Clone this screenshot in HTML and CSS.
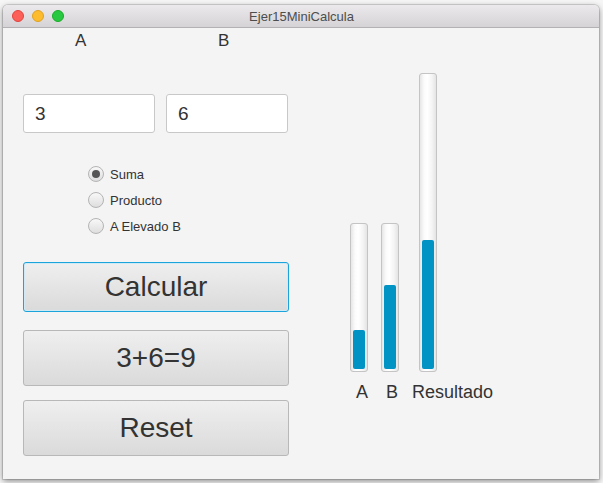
FILE: index.html
```html
<!DOCTYPE html>
<html>
<head>
<meta charset="utf-8">
<link rel="stylesheet" href="styles.css">
</head>
<body>
<div class="window">
  <div class="titlebar">
    <div class="lights">
      <span class="light red"></span>
      <span class="light yellow"></span>
      <span class="light green"></span>
    </div>
    <div class="title">Ejer15MiniCalcula</div>
  </div>
  <div class="content">
    <div class="left">
      <div class="ab-labels">
        <span class="lab-a">A</span>
        <span class="lab-b">B</span>
      </div>
      <div class="fields">
        <div class="field f1">3</div>
        <div class="field f2">6</div>
      </div>
      <div class="radios">
        <div class="radio-row"><span class="radio checked"></span><span>Suma</span></div>
        <div class="radio-row"><span class="radio"></span><span>Producto</span></div>
        <div class="radio-row"><span class="radio"></span><span>A Elevado B</span></div>
      </div>
      <div class="btn btn-calc">Calcular</div>
      <div class="btn btn-res">3+6=9</div>
      <div class="btn btn-reset">Reset</div>
    </div>
    <div class="right">
      <div class="bars">
        <div class="track short"><div class="fill" style="height:27%"></div></div>
        <div class="track short b"><div class="fill" style="height:59%"></div></div>
        <div class="track tall"><div class="fill" style="height:44%"></div></div>
      </div>
      <div class="bar-labels">
        <span class="bl-a">A</span>
        <span class="bl-b">B</span>
        <span>Resultado</span>
      </div>
    </div>
  </div>
</div>
</body>
</html>
```

FILE: styles.css
```css
* { box-sizing: border-box; }
html, body { margin: 0; padding: 0; }
body {
  background: #f6f6f6;
  padding: 5px 4px 4px 3px;
  font-family: "Liberation Sans", Arial, sans-serif;
  color: #333;
  width: 603px;
  height: 483px;
  overflow: hidden;
}
.window {
  width: 596px;
  height: 474px;
  border-radius: 5px 5px 0 0;
  box-shadow: 0 2px 6px rgba(0,0,0,0.45), 0 0 0 1px rgba(0,0,0,0.12);
  background: #f4f4f4;
  display: flex;
  flex-direction: column;
  overflow: hidden;
}
.titlebar {
  height: 23px;
  flex: none;
  background: linear-gradient(#ebe9eb, #d5d3d5);
  border-bottom: 1px solid #b3b1b3;
  display: flex;
  align-items: center;
  position: relative;
}
.lights {
  display: flex;
  gap: 8px;
  padding-left: 9px;
}
.light {
  width: 12px;
  height: 12px;
  border-radius: 50%;
  display: block;
}
.red { background: #fc5f57; border: 1px solid #e0443e; }
.yellow { background: #fdbc2e; border: 1px solid #dea123; }
.green { background: #28c840; border: 1px solid #1aab29; }
.title {
  flex: 1;
  text-align: center;
  font-size: 13px;
  color: #4d4d4d;
  margin-left: -60px;
  padding-top: 1px;
}
.content {
  flex: 1;
  display: flex;
  padding-left: 20px;
}
.left {
  width: 266px;
  display: flex;
  flex-direction: column;
}
.ab-labels {
  display: flex;
  padding-top: 3px;
  font-size: 17px;
  line-height: 20px;
}
.lab-a { width: 195px; padding-left: 52px; }
.fields {
  display: flex;
  gap: 11px;
  margin-top: 43px;
}
.field {
  height: 39px;
  background: #fff;
  border: 1px solid #c8c8c8;
  border-radius: 3px;
  font-size: 19px;
  line-height: 37px;
  padding-left: 11px;
  color: #333;
}
.f1 { width: 132px; }
.f2 { width: 122px; }
.radios {
  margin-top: 28px;
  padding-left: 65px;
  font-size: 13px;
}
.radio-row {
  height: 26px;
  display: flex;
  align-items: center;
  gap: 6px;
}
.radio {
  width: 16px;
  height: 16px;
  border-radius: 50%;
  border: 1px solid #b4b4b4;
  background: linear-gradient(#f8f8f8, #dedede);
  display: flex;
  align-items: center;
  justify-content: center;
}
.radio.checked::after {
  content: "";
  width: 8px;
  height: 8px;
  border-radius: 50%;
  background: #555;
}
.btn {
  width: 266px;
  border: 1px solid #b8b8b8;
  border-radius: 3px;
  background: linear-gradient(#efefef, #dadada);
  display: flex;
  align-items: center;
  justify-content: center;
  font-size: 28px;
  color: #333;
}
.btn-calc {
  margin-top: 23px;
  height: 50px;
  border-color: #1ba4dc;
  box-shadow: inset 0 0 0 1px #cfe9f5;
}
.btn-res { margin-top: 18px; height: 56px; }
.btn-reset { margin-top: 14px; height: 56px; }
.right {
  margin-left: 61px;
  padding-top: 45px;
  display: flex;
  flex-direction: column;
}
.bars {
  display: flex;
  align-items: flex-end;
}
.track {
  width: 18px;
  border: 1px solid #c4c4c4;
  border-radius: 3px;
  background: linear-gradient(to right, #e6e6e6, #fbfbfb 25%, #ffffff 45%, #f4f4f4 75%, #e4e4e4);
  padding: 2px;
  display: flex;
  flex-direction: column;
  justify-content: flex-end;
}
.short { height: 149px; }
.short.b { margin-left: 13px; }
.tall { height: 299px; margin-left: 20px; }
.fill {
  background: #0093c4;
  border-radius: 2px;
}
.bar-labels {
  display: flex;
  margin-top: 10px;
  padding-left: 6px;
  font-size: 18px;
  line-height: 20px;
}
.bl-a { width: 30px; }
.bl-b { width: 26px; }
```
